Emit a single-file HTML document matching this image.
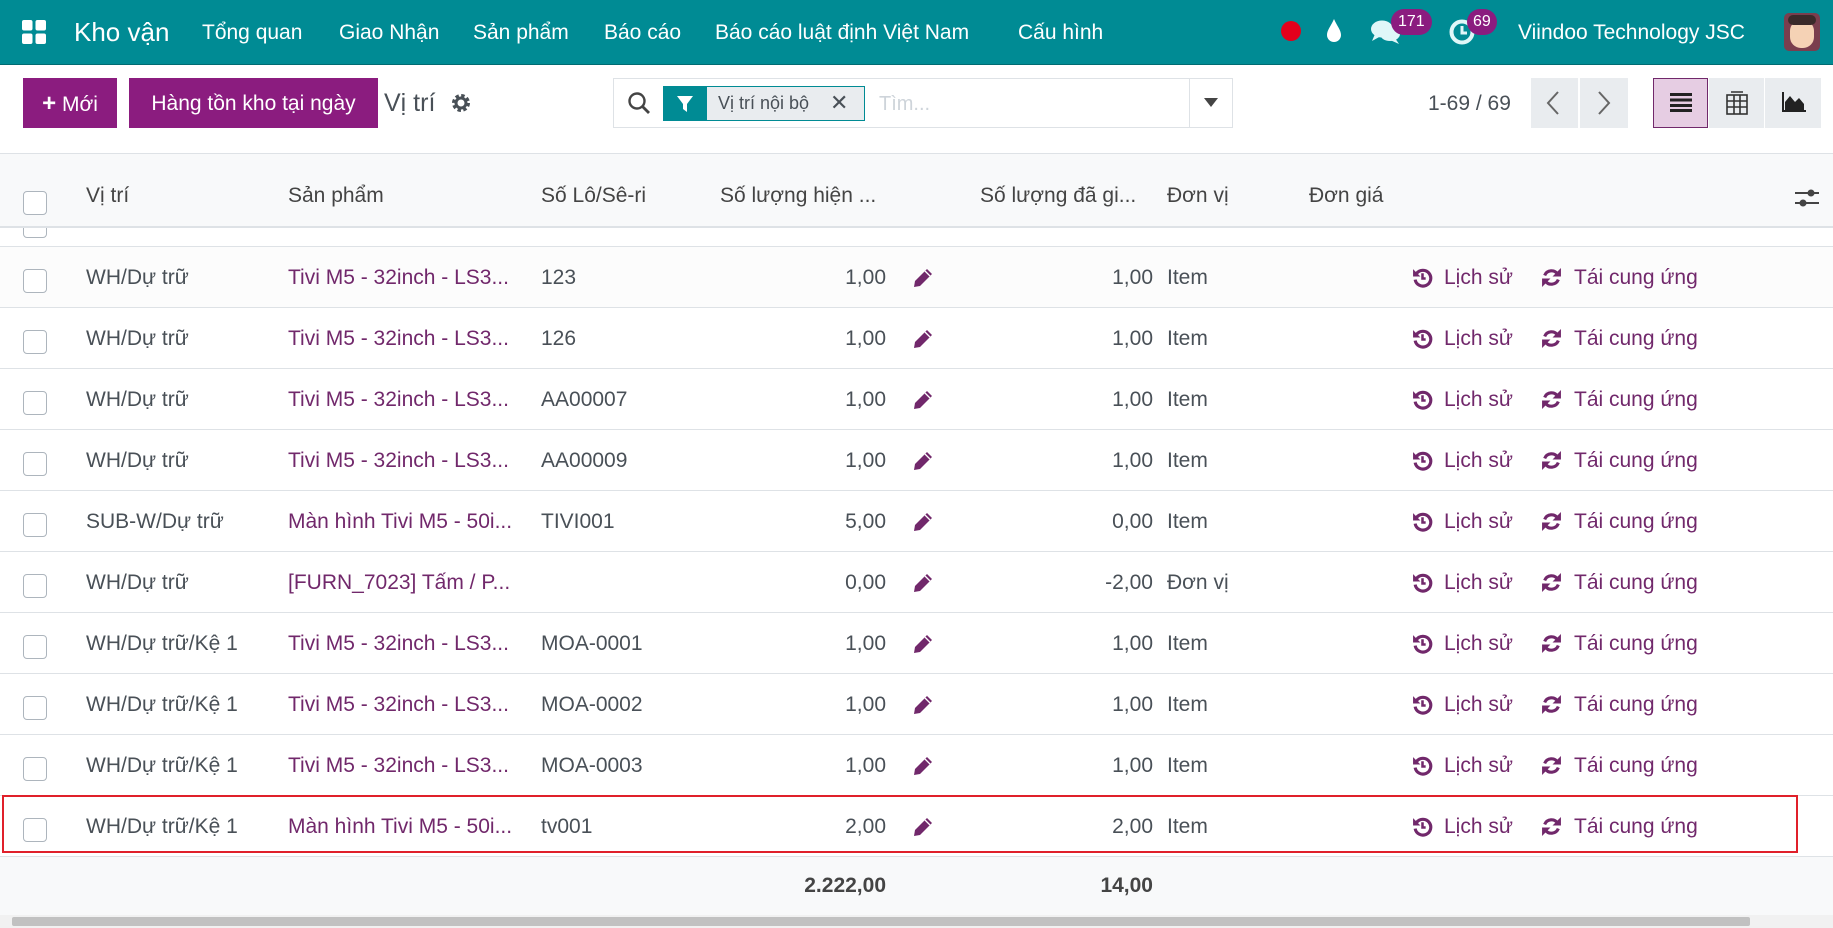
<!DOCTYPE html>
<html><head><meta charset="utf-8">
<style>
*{box-sizing:border-box;margin:0;padding:0}
body{width:1833px;height:928px;overflow:hidden;background:#fff;font-family:"Liberation Sans","DejaVu Sans",sans-serif;color:#495057;position:relative;font-size:21px}
.a{position:absolute;white-space:nowrap}
.nav{position:absolute;left:0;top:0;width:1833px;height:65px;background:#008b94;color:#fff;border-bottom:1px solid #006b72}
.nav .t{top:21px;font-size:21px}
.btn{position:absolute;top:78px;height:50px;background:#8b1c7f;color:#fff;font-size:21px;line-height:52px;text-align:center}
.hdr{position:absolute;left:0;top:153px;width:1833px;height:75px;background:#f8f9fa;border-top:1px solid #dee2e6;border-bottom:2px solid #dee2e6}
.hdr .t{top:30px;color:#444}
.row{position:absolute;left:0;width:1833px;height:61px;border-bottom:1px solid #dee2e6}
.row div.a{top:19px}
.cb{position:absolute;left:23px;width:24px;height:24px;border:1.5px solid #adb5bd;border-radius:4px;background:#fff}
.row div.cb{top:22px}
.p{color:#71286b}
.r{text-align:right}
.lk{color:#71286b}
</style></head><body>
<div class="nav">
 <svg class="a" style="left:22px;top:20px" width="24" height="24" viewBox="0 0 24 24" fill="#fff"><rect x="0" y="0" width="10.5" height="10.5" rx="2"/><rect x="13.5" y="0" width="10.5" height="10.5" rx="2"/><rect x="0" y="13.5" width="10.5" height="10.5" rx="2"/><rect x="13.5" y="13.5" width="10.5" height="10.5" rx="2"/></svg>
 <div class="a" style="left:74px;top:17px;font-size:26px">Kho vận</div>
 <div class="a t" style="left:202px">Tổng quan</div>
 <div class="a t" style="left:339px">Giao Nhận</div>
 <div class="a t" style="left:473px">Sản phẩm</div>
 <div class="a t" style="left:604px">Báo cáo</div>
 <div class="a t" style="left:715px">Báo cáo luật định Việt Nam</div>
 <div class="a t" style="left:1018px">Cấu hình</div>
 <div class="a" style="left:1281px;top:21px;width:20px;height:20px;border-radius:50%;background:#e3001b"></div>
 <svg class="a" style="left:1325px;top:18px" width="18" height="26" viewBox="0 0 18 26"><path d="M9 1 C6 8 2 12 2 17 a7 7 0 0 0 14 0 C16 12 12 8 9 1Z" fill="#fff"/></svg>
 <svg class="a" style="left:1370px;top:18px" width="32" height="28" viewBox="0 0 32 28" fill="#e0f7f8"><ellipse cx="12" cy="11" rx="11" ry="8.5"/><path d="M5 16 L2 23 L11 18Z"/><ellipse cx="20" cy="16" rx="10" ry="7"/><path d="M25 20 L29 26 L20 22Z"/></svg>
 <div class="a" style="left:1391px;top:9px;height:26px;padding:0 7px;border-radius:13px;background:#8b1c7f;font-size:16px;line-height:26px">171</div>
 <svg class="a" style="left:1448px;top:18px" width="28" height="28" viewBox="0 0 28 28"><circle cx="14" cy="14" r="10.5" fill="none" stroke="#e0f7f8" stroke-width="4"/><path d="M14 8v7h5" fill="none" stroke="#e0f7f8" stroke-width="3"/></svg>
 <div class="a" style="left:1467px;top:9px;height:26px;padding:0 6px;border-radius:13px;background:#8b1c7f;font-size:16px;line-height:26px">69</div>
 <div class="a t" style="left:1518px">Viindoo Technology JSC</div>
 <div class="a" style="left:1784px;top:13px;width:36px;height:38px;border-radius:5px;background:#7a3e4e;overflow:hidden"><div style="position:absolute;left:6px;top:7px;width:24px;height:28px;border-radius:11px;background:#f5d2b5"></div><div style="position:absolute;left:4px;top:2px;width:28px;height:10px;border-radius:6px;background:#3a2a2a"></div></div>
</div>

<div class="btn" style="left:23px;width:94px"><b style="font-size:24px">+</b> Mới</div>
<div class="btn" style="left:129px;width:249px">Hàng tồn kho tại ngày</div>
<div class="a" style="left:384px;top:89px;font-size:25px;color:#495057">Vị trí</div>
<svg class="a" style="left:451px;top:93px" width="20" height="20" viewBox="0 0 20 20"><circle cx="10" cy="10" r="6.5" fill="none" stroke="#495057" stroke-width="5" stroke-dasharray="3 2.1"/><circle cx="10" cy="10" r="5" fill="none" stroke="#495057" stroke-width="3"/></svg>

<div class="a" style="left:613px;top:78px;width:620px;height:50px;border:1px solid #dee2e6"></div>
<svg class="a" style="left:627px;top:91px" width="24" height="24" viewBox="0 0 24 24"><circle cx="10" cy="10" r="7.5" fill="none" stroke="#444" stroke-width="2.4"/><path d="M15.5 15.5 L22 22" stroke="#444" stroke-width="2.8"/></svg>
<div class="a" style="left:663px;top:86px;width:202px;height:35px;border:1px solid #008b94;background:#e9ecef"></div>
<div class="a" style="left:663px;top:86px;width:44px;height:35px;background:#008b94"></div>
<svg class="a" style="left:675px;top:94px" width="20" height="20" viewBox="0 0 20 20"><path d="M2 2h16l-6 8v8l-4-3v-5Z" fill="#fff"/></svg>
<div class="a" style="left:718px;top:93px;font-size:18px;color:#495057">Vị trí nội bộ</div>
<div class="a" style="left:830px;top:90px;font-size:22px;color:#495057;font-weight:bold">✕</div>
<div class="a" style="left:879px;top:93px;font-size:20px;color:#ced4da">Tìm...</div>
<div class="a" style="left:1189px;top:79px;width:1px;height:48px;background:#dee2e6"></div>
<svg class="a" style="left:1204px;top:98px" width="14" height="10" viewBox="0 0 14 10"><path d="M0 0h14L7 9Z" fill="#444"/></svg>

<div class="a" style="left:1428px;top:92px;font-size:21px;color:#495057">1-69 / 69</div>
<div class="a" style="left:1531px;top:78px;width:47px;height:50px;background:#e9ecef"></div>
<div class="a" style="left:1580px;top:78px;width:48px;height:50px;background:#e9ecef"></div>
<svg class="a" style="left:1546px;top:91px" width="14" height="24" viewBox="0 0 14 24"><path d="M12 1 L2 12 L12 23" fill="none" stroke="#666" stroke-width="2"/></svg>
<svg class="a" style="left:1597px;top:91px" width="14" height="24" viewBox="0 0 14 24"><path d="M2 1 L12 12 L2 23" fill="none" stroke="#666" stroke-width="2"/></svg>
<div class="a" style="left:1653px;top:78px;width:55px;height:50px;background:#e6cde3;border:1px solid #71286b"></div>
<div class="a" style="left:1709px;top:78px;width:55px;height:50px;background:#e9ecef"></div>
<div class="a" style="left:1765px;top:78px;width:56px;height:50px;background:#e9ecef"></div>
<svg class="a" style="left:1670px;top:92px" width="22" height="20" viewBox="0 0 22 20" fill="#222"><rect y="1" width="22" height="3"/><rect y="6.5" width="22" height="3"/><rect y="12" width="22" height="3"/><rect y="17" width="22" height="3"/></svg>
<svg class="a" style="left:1726px;top:91px" width="22" height="24" viewBox="0 0 22 24" fill="none" stroke="#333" stroke-width="1.6"><rect x="1" y="4" width="20" height="19"/><path d="M1 10h20M1 16h20M8 4v19M14 4v19M5 1h12"/></svg>
<svg class="a" style="left:1782px;top:92px" width="24" height="20" viewBox="0 0 24 20"><path d="M1 0v19h23" fill="none" stroke="#222" stroke-width="2"/><path d="M3 18 L3 10 L8 4 L13 10 L17 6 L22 12 L22 18Z" fill="#222"/></svg>

<div class="hdr">
 <div class="cb" style="top:37px"></div>
 <div class="a t" style="left:86px">Vị trí</div>
 <div class="a t" style="left:288px">Sản phẩm</div>
 <div class="a t" style="left:541px">Số Lô/Sê-ri</div>
 <div class="a t" style="left:720px">Số lượng hiện ...</div>
 <div class="a t" style="left:980px">Số lượng đã gi...</div>
 <div class="a t" style="left:1167px">Đơn vị</div>
 <div class="a t" style="left:1309px">Đơn giá</div>
 <svg class="a" style="left:1795px;top:33px" width="24" height="22" viewBox="0 0 24 22"><path d="M0 6h24M0 16h24" stroke="#444" stroke-width="2"/><circle cx="16" cy="6" r="3.5" fill="#444"/><circle cx="8" cy="16" r="3.5" fill="#444"/></svg>
</div>
<div class="row" style="top:228px;height:19px;overflow:hidden"><div class="cb" style="top:-14px"></div></div>

<svg width="0" height="0" style="position:absolute"><defs>
<symbol id="pen" viewBox="0 0 20 20"><path d="M14 1 L19 6 L7 18 L1 19 L2 13Z" fill="#71286b"/><path d="M12 3 L17 8" stroke="#fff" stroke-width="1.3"/></symbol>
<symbol id="hist" viewBox="0 0 20 20"><path d="M4.5 6 A7.5 7.5 0 1 1 3 12" fill="none" stroke="#71286b" stroke-width="3"/><path d="M1 2 L1 9 L8 9Z" fill="#71286b"/><path d="M10 6v5h3" fill="none" stroke="#71286b" stroke-width="2.4"/></symbol>
<symbol id="ref" viewBox="0 0 20 20"><path d="M16 7 A7 7 0 0 0 3.5 8" fill="none" stroke="#71286b" stroke-width="3"/><path d="M19 1 V9 H11Z" fill="#71286b"/><path d="M4 13 A7 7 0 0 0 16.5 12" fill="none" stroke="#71286b" stroke-width="3"/><path d="M1 19 V11 H9Z" fill="#71286b"/></symbol>
</defs></svg>

<div class="row" style="top:247px;background:#fcfcfc"><div class="cb"></div><div class="a" style="left:86px">WH/Dự trữ</div><div class="a p" style="left:288px">Tivi M5 - 32inch - LS3...</div><div class="a" style="left:541px">123</div><div class="a r" style="left:786px;width:100px">1,00</div><svg class="a" style="left:913px;top:21px" width="20" height="20"><use href="#pen"/></svg><div class="a r" style="left:1053px;width:100px">1,00</div><div class="a" style="left:1167px">Item</div><svg class="a" style="left:1412px;top:20px" width="21" height="21"><use href="#hist"/></svg><div class="a lk" style="left:1444px">Lịch sử</div><svg class="a" style="left:1541px;top:20px" width="21" height="21"><use href="#ref"/></svg><div class="a lk" style="left:1574px">Tái cung ứng</div></div>
<div class="row" style="top:308px"><div class="cb"></div><div class="a" style="left:86px">WH/Dự trữ</div><div class="a p" style="left:288px">Tivi M5 - 32inch - LS3...</div><div class="a" style="left:541px">126</div><div class="a r" style="left:786px;width:100px">1,00</div><svg class="a" style="left:913px;top:21px" width="20" height="20"><use href="#pen"/></svg><div class="a r" style="left:1053px;width:100px">1,00</div><div class="a" style="left:1167px">Item</div><svg class="a" style="left:1412px;top:20px" width="21" height="21"><use href="#hist"/></svg><div class="a lk" style="left:1444px">Lịch sử</div><svg class="a" style="left:1541px;top:20px" width="21" height="21"><use href="#ref"/></svg><div class="a lk" style="left:1574px">Tái cung ứng</div></div>
<div class="row" style="top:369px"><div class="cb"></div><div class="a" style="left:86px">WH/Dự trữ</div><div class="a p" style="left:288px">Tivi M5 - 32inch - LS3...</div><div class="a" style="left:541px">AA00007</div><div class="a r" style="left:786px;width:100px">1,00</div><svg class="a" style="left:913px;top:21px" width="20" height="20"><use href="#pen"/></svg><div class="a r" style="left:1053px;width:100px">1,00</div><div class="a" style="left:1167px">Item</div><svg class="a" style="left:1412px;top:20px" width="21" height="21"><use href="#hist"/></svg><div class="a lk" style="left:1444px">Lịch sử</div><svg class="a" style="left:1541px;top:20px" width="21" height="21"><use href="#ref"/></svg><div class="a lk" style="left:1574px">Tái cung ứng</div></div>
<div class="row" style="top:430px"><div class="cb"></div><div class="a" style="left:86px">WH/Dự trữ</div><div class="a p" style="left:288px">Tivi M5 - 32inch - LS3...</div><div class="a" style="left:541px">AA00009</div><div class="a r" style="left:786px;width:100px">1,00</div><svg class="a" style="left:913px;top:21px" width="20" height="20"><use href="#pen"/></svg><div class="a r" style="left:1053px;width:100px">1,00</div><div class="a" style="left:1167px">Item</div><svg class="a" style="left:1412px;top:20px" width="21" height="21"><use href="#hist"/></svg><div class="a lk" style="left:1444px">Lịch sử</div><svg class="a" style="left:1541px;top:20px" width="21" height="21"><use href="#ref"/></svg><div class="a lk" style="left:1574px">Tái cung ứng</div></div>
<div class="row" style="top:491px"><div class="cb"></div><div class="a" style="left:86px">SUB-W/Dự trữ</div><div class="a p" style="left:288px">Màn hình Tivi M5 - 50i...</div><div class="a" style="left:541px">TIVI001</div><div class="a r" style="left:786px;width:100px">5,00</div><svg class="a" style="left:913px;top:21px" width="20" height="20"><use href="#pen"/></svg><div class="a r" style="left:1053px;width:100px">0,00</div><div class="a" style="left:1167px">Item</div><svg class="a" style="left:1412px;top:20px" width="21" height="21"><use href="#hist"/></svg><div class="a lk" style="left:1444px">Lịch sử</div><svg class="a" style="left:1541px;top:20px" width="21" height="21"><use href="#ref"/></svg><div class="a lk" style="left:1574px">Tái cung ứng</div></div>
<div class="row" style="top:552px"><div class="cb"></div><div class="a" style="left:86px">WH/Dự trữ</div><div class="a p" style="left:288px">[FURN_7023] Tấm / P...</div><div class="a r" style="left:786px;width:100px">0,00</div><svg class="a" style="left:913px;top:21px" width="20" height="20"><use href="#pen"/></svg><div class="a r" style="left:1053px;width:100px">-2,00</div><div class="a" style="left:1167px">Đơn vị</div><svg class="a" style="left:1412px;top:20px" width="21" height="21"><use href="#hist"/></svg><div class="a lk" style="left:1444px">Lịch sử</div><svg class="a" style="left:1541px;top:20px" width="21" height="21"><use href="#ref"/></svg><div class="a lk" style="left:1574px">Tái cung ứng</div></div>
<div class="row" style="top:613px"><div class="cb"></div><div class="a" style="left:86px">WH/Dự trữ/Kệ 1</div><div class="a p" style="left:288px">Tivi M5 - 32inch - LS3...</div><div class="a" style="left:541px">MOA-0001</div><div class="a r" style="left:786px;width:100px">1,00</div><svg class="a" style="left:913px;top:21px" width="20" height="20"><use href="#pen"/></svg><div class="a r" style="left:1053px;width:100px">1,00</div><div class="a" style="left:1167px">Item</div><svg class="a" style="left:1412px;top:20px" width="21" height="21"><use href="#hist"/></svg><div class="a lk" style="left:1444px">Lịch sử</div><svg class="a" style="left:1541px;top:20px" width="21" height="21"><use href="#ref"/></svg><div class="a lk" style="left:1574px">Tái cung ứng</div></div>
<div class="row" style="top:674px"><div class="cb"></div><div class="a" style="left:86px">WH/Dự trữ/Kệ 1</div><div class="a p" style="left:288px">Tivi M5 - 32inch - LS3...</div><div class="a" style="left:541px">MOA-0002</div><div class="a r" style="left:786px;width:100px">1,00</div><svg class="a" style="left:913px;top:21px" width="20" height="20"><use href="#pen"/></svg><div class="a r" style="left:1053px;width:100px">1,00</div><div class="a" style="left:1167px">Item</div><svg class="a" style="left:1412px;top:20px" width="21" height="21"><use href="#hist"/></svg><div class="a lk" style="left:1444px">Lịch sử</div><svg class="a" style="left:1541px;top:20px" width="21" height="21"><use href="#ref"/></svg><div class="a lk" style="left:1574px">Tái cung ứng</div></div>
<div class="row" style="top:735px"><div class="cb"></div><div class="a" style="left:86px">WH/Dự trữ/Kệ 1</div><div class="a p" style="left:288px">Tivi M5 - 32inch - LS3...</div><div class="a" style="left:541px">MOA-0003</div><div class="a r" style="left:786px;width:100px">1,00</div><svg class="a" style="left:913px;top:21px" width="20" height="20"><use href="#pen"/></svg><div class="a r" style="left:1053px;width:100px">1,00</div><div class="a" style="left:1167px">Item</div><svg class="a" style="left:1412px;top:20px" width="21" height="21"><use href="#hist"/></svg><div class="a lk" style="left:1444px">Lịch sử</div><svg class="a" style="left:1541px;top:20px" width="21" height="21"><use href="#ref"/></svg><div class="a lk" style="left:1574px">Tái cung ứng</div></div>
<div class="row" style="top:796px"><div class="cb"></div><div class="a" style="left:86px">WH/Dự trữ/Kệ 1</div><div class="a p" style="left:288px">Màn hình Tivi M5 - 50i...</div><div class="a" style="left:541px">tv001</div><div class="a r" style="left:786px;width:100px">2,00</div><svg class="a" style="left:913px;top:21px" width="20" height="20"><use href="#pen"/></svg><div class="a r" style="left:1053px;width:100px">2,00</div><div class="a" style="left:1167px">Item</div><svg class="a" style="left:1412px;top:20px" width="21" height="21"><use href="#hist"/></svg><div class="a lk" style="left:1444px">Lịch sử</div><svg class="a" style="left:1541px;top:20px" width="21" height="21"><use href="#ref"/></svg><div class="a lk" style="left:1574px">Tái cung ứng</div></div>
<div class="a" style="left:2px;top:795px;width:1796px;height:58px;border:2px solid #e0202a"></div>

<div class="a" style="left:0;top:857px;width:1833px;height:58px;background:#f8f9fa"></div>
<div class="a r" style="left:736px;top:874px;width:150px;font-weight:bold;color:#444">2.222,00</div>
<div class="a r" style="left:1003px;top:874px;width:150px;font-weight:bold;color:#444">14,00</div>
<div class="a" style="left:0;top:915px;width:1833px;height:13px;background:#f1f1f1"></div>
<div class="a" style="left:12px;top:917px;width:1738px;height:9px;background:#c1c1c1;border-radius:2px"></div>
</body></html>
